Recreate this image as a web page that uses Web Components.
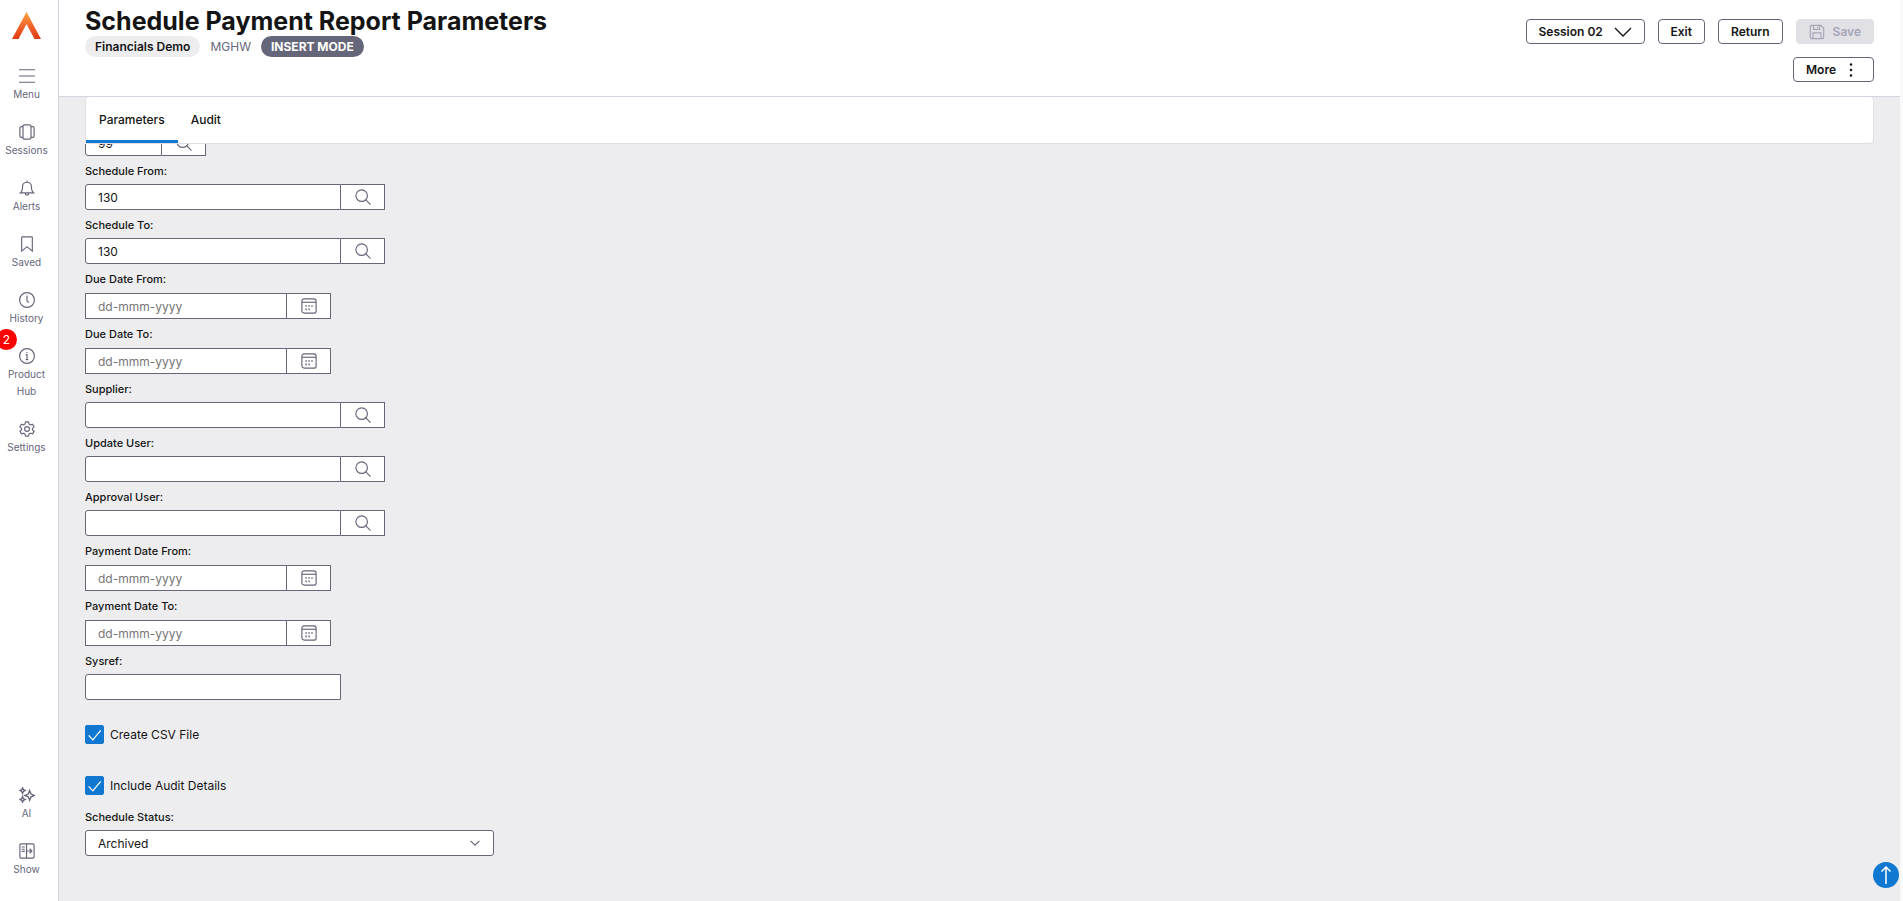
<!DOCTYPE html>
<html lang="en">
<head>
  <meta charset="utf-8">
  <meta name="viewport" content="width=device-width, initial-scale=1">
  <title>Schedule Payment Report Parameters</title>
  <style>
    :root {
      --ink: #141414;
      --slate: #66667a;
      --line: #d5d3e0;
      --page: #ededef;
      --blue: #1178d1;
      --text-xs: 10px;
      --text-sm: 11px;
      --text-md: 12px;
      --text-xl: 25px;
    }

    html,
    body {
      height: 100%;
      margin: 0;
    }

    body {
      font-family: Inter, "Open Sans", sans-serif;
      font-size: var(--text-md);
      color: var(--ink);
      background: #fafafa;
    }
  </style>
</head>
<body>
  <app-shell>
    <side-bar slot="nav">
      <nav-item icon="menu">Menu</nav-item>
      <nav-item icon="sessions">Sessions</nav-item>
      <nav-item icon="bell">Alerts</nav-item>
      <nav-item icon="bookmark">Saved</nav-item>
      <nav-item icon="clock">History</nav-item>
      <nav-item icon="info" badge="2">Product Hub</nav-item>
      <nav-item icon="gear">Settings</nav-item>
      <nav-item slot="bottom" icon="sparkles">AI</nav-item>
      <nav-item slot="bottom" icon="panel">Show</nav-item>
    </side-bar>

    <page-header slot="header">
      <span slot="title">Schedule Payment Report Parameters</span>
      <status-chip slot="meta">Financials Demo</status-chip>
      <status-chip slot="meta" kind="plain">MGHW</status-chip>
      <status-chip slot="meta" kind="dark">INSERT MODE</status-chip>
      <session-picker slot="actions" value="Session 02"></session-picker>
      <tool-button slot="actions">Exit</tool-button>
      <tool-button slot="actions">Return</tool-button>
      <tool-button slot="actions" icon="save" disabled>Save</tool-button>
      <tool-button slot="more" icon="dots" icon-end>More</tool-button>
    </page-header>

    <tab-bar slot="tabs" tabs="Parameters,Audit"></tab-bar>

    <lookup-field kind="search" value="99" size="small"></lookup-field>
    <lookup-field kind="search" label="Schedule From:" value="130"></lookup-field>
    <lookup-field kind="search" label="Schedule To:" value="130"></lookup-field>
    <lookup-field kind="date" label="Due Date From:"></lookup-field>
    <lookup-field kind="date" label="Due Date To:"></lookup-field>
    <lookup-field kind="search" label="Supplier:"></lookup-field>
    <lookup-field kind="search" label="Update User:"></lookup-field>
    <lookup-field kind="search" label="Approval User:"></lookup-field>
    <lookup-field kind="date" label="Payment Date From:"></lookup-field>
    <lookup-field kind="date" label="Payment Date To:"></lookup-field>
    <lookup-field kind="text" label="Sysref:"></lookup-field>
    <check-field checked>Create CSV File</check-field>
    <check-field checked>Include Audit Details</check-field>
    <select-field label="Schedule Status:" value="Archived"></select-field>

    <back-to-top slot="float"></back-to-top>
  </app-shell>

  <script>
    const icons = {
      menu: `<path d="M0 2h18M0 9h18M0 16h18"/>`,
      sessions: `<rect x="4.5" y="1" width="9" height="16" rx="1.5"/><path d="M4.5 3H2.500A1.500 1.500 0 0 0 1 4.500v9A1.500 1.500 0 0 0 2.500 15h2M13.500 3h2A1.500 1.500 0 0 1 17 4.500v9a1.500 1.500 0 0 1-1.500 1.500h-2"/>`,
      bell: `<path d="M1.500 14.500C3.500 13 4 11.500 4 7.500a5 5 0 0 1 10 0c0 4 .5 5.500 2.500 7zM7 15a2 2 0 0 0 4 0M9 2.500V.5"/>`,
      bookmark: `<path d="M3.800 1h10.400a.8.8 0 0 1 .8.8V17L9 12l-6 5V1.800a.8.8 0 0 1 .8-.8z"/>`,
      clock: `<circle cx="9" cy="9" r="8.300"/><path d="M9 4v6l2 2"/>`,
      info: `<circle cx="9" cy="9" r="8.300"/><path d="M7.500 7.500H9V13M7.500 13h3M9 4.500v1.200"/>`,
      gear: `<path d="M7.300 1h3.400l.6 2.500 1.500.9 2.500-.8 1.700 3-1.900 1.700v1.500l1.900 1.700-1.700 3-2.500-.8-1.500.9-.6 2.400H7.300l-.6-2.400-1.500-.9-2.500.8-1.700-3 1.900-1.700V8.300L1 6.600l1.700-3 2.500.8 1.500-.9z" stroke-linejoin="round"/><circle cx="9" cy="9" r="2.700"/>`,
      sparkles: `<path d="M12 4 13.600 7.900 17.500 9.500 13.600 11.100 12 15 10.400 11.100 6.500 9.500 10.400 7.900zM4 .8 4.900 3 7 4 4.900 5 4 7.200 3.100 5 1 4 3.100 3zM4 10.800 4.900 13 7 14l-2.100 1L4 17.200 3.100 15 1 14l2.100-1z" stroke-width="1.500"/>`,
      panel: `<rect x="1" y="1" width="16" height="16" rx="1.500"/><path d="M8.500 1v16M3 4.500h3.500M3 7h3.500M3 9.500h3.500M8.500 9H14M12 6.500 14.500 9 12 11.500"/>`,
      search: `<circle cx="7.500" cy="7.500" r="6.500"/><path d="m12 12 5.500 5.500"/>`,
      calendar: `<rect x="1" y="1" width="16" height="16" rx="2.500"/><path d="M1 4.800h16"/><path d="M5 9h1.600M8.300 9h1.600M11.600 9h1.600M5 12.800h1.600M8.300 12.800h1.600" stroke-width="1.800"/>`,
      save: `<path d="M1.500 3A1.500 1.500 0 0 1 3 1.500h10.500l3 3V15a1.500 1.500 0 0 1-1.500 1.500H3A1.500 1.500 0 0 1 1.500 15zM5 1.500V6h7V1.500M4.500 16.500V10h9v6.500M9.800 3v1.500"/>`,
      dots: `<g fill="currentColor" stroke="none"><circle cx="9" cy="2" r="1.600"/><circle cx="9" cy="9" r="1.600"/><circle cx="9" cy="16" r="1.600"/></g>`,
      chevron: `<path d="m1 5 8 8 8-8"/>`,
      tick: `<path d="m2 10 5 5.500L16.500 4" stroke-width="1.500"/>`,
      up: `<path d="M9 18V1M4.500 5.500 9 1l4.500 4.500" stroke-width="1.500"/>`,
    };

    function icon(name, size = 16) {
      return `<svg width="${size}" height="${size}" viewBox="0 0 18 18" fill="none" stroke="currentColor" stroke-width="1.300" aria-hidden="true">${icons[name]}</svg>`;
    }

    class BaseElement extends HTMLElement {
      constructor() {
        super();
        this.attachShadow({ mode: "open" });
      }

      connectedCallback() {
        this.shadowRoot.innerHTML = `
          <style>
            * { box-sizing: border-box; }
            button, input, select { font: inherit; color: inherit; margin: 0; }
            button { cursor: pointer; }
            svg { display: block; flex: none; }
          </style>
          ${this.render()}
        `;
      }
    }

    class AppShell extends BaseElement {
      render() {
        return `
          <style>
            :host {
              display: grid;
              grid-template-columns: auto minmax(0, 1fr);
              height: 100vh;
              padding-right: 3px;
              box-sizing: border-box;
            }
            .page {
              display: flex;
              flex-direction: column;
              min-height: 0;
              background: var(--page);
            }
            .tabs { padding: 0 26px; }
            main {
              flex: 1;
              min-height: 0;
              overflow: hidden;
              padding: 0 26px;
            }
            /* the form is scrolled so its first row slides under the tabs */
            form { margin-top: -14px; }
          </style>
          <slot name="nav"></slot>
          <div class="page">
            <slot name="header"></slot>
            <div class="tabs"><slot name="tabs"></slot></div>
            <main><form><slot></slot></form></main>
          </div>
          <slot name="float"></slot>
        `;
      }
    }

    class SideBar extends BaseElement {
      render() {
        return `
          <style>
            :host {
              display: flex;
              box-sizing: border-box;
              width: 59px;
              background: #fff;
              border-right: 1px solid var(--line);
            }
            nav {
              flex: 1;
              display: flex;
              flex-direction: column;
              align-items: flex-start;
              padding: 12px 0 2px;
            }
            .logo { display: block; margin: 0 12px 28px; }
            .bottom { margin-top: auto; }
          </style>
          <nav aria-label="Main">
            <a class="logo" href="#" aria-label="Home">
              <svg width="29" height="28" viewBox="0 0 29 28">
                <defs>
                  <linearGradient id="flame" x1="0" y1="0" x2="0" y2="1">
                    <stop offset="0" stop-color="#fba43c"/>
                    <stop offset=".5" stop-color="#f2672e"/>
                    <stop offset="1" stop-color="#df3a12"/>
                  </linearGradient>
                </defs>
                <path fill="url(#flame)" d="M14.500 0 29 27h-6.500L14.500 12 6.500 27H0z"/>
              </svg>
            </a>
            <slot></slot>
            <div class="bottom"><slot name="bottom"></slot></div>
          </nav>
        `;
      }
    }

    class NavItem extends BaseElement {
      render() {
        const badge = this.getAttribute("badge");
        return `
          <style>
            :host { display: block; position: relative; width: 53px; color: var(--slate); }
            button {
              display: flex;
              flex-direction: column;
              align-items: center;
              gap: 2px;
              width: 100%;
              padding: 0 0 21px;
              border: 0;
              background: none;
              font-size: var(--text-xs);
              line-height: 17px;
            }
            .badge {
              position: absolute;
              left: -4px;
              top: -19px;
              width: 21px;
              height: 21px;
              border-radius: 50%;
              background: #f00;
              color: #fff;
              font-size: var(--text-md);
              line-height: 21px;
              text-align: center;
            }
          </style>
          <button type="button">${icon(this.getAttribute("icon"))}<span><slot></slot></span></button>
          ${badge ? `<span class="badge">${badge}</span>` : ""}
        `;
      }
    }

    class PageHeader extends BaseElement {
      render() {
        return `
          <style>
            :host { display: block; }
            header {
              display: flex;
              justify-content: space-between;
              min-height: 97px;
              padding: 8px 26px 13px;
              background: #fff;
              border-bottom: 1px solid var(--line);
            }
            h1 { margin: 0; font-size: var(--text-xl); line-height: 26px; font-weight: 700; }
            .meta { display: flex; align-items: center; gap: 10px; margin-top: 2px; }
            .tools {
              display: flex;
              flex-direction: column;
              align-items: flex-end;
              gap: 13px;
              padding-top: 11px;
            }
            .row { display: flex; gap: 13px; }
          </style>
          <header>
            <div>
              <h1><slot name="title"></slot></h1>
              <div class="meta"><slot name="meta"></slot></div>
            </div>
            <div class="tools">
              <div class="row"><slot name="actions"></slot></div>
              <div class="row"><slot name="more"></slot></div>
            </div>
          </header>
        `;
      }
    }

    class StatusChip extends BaseElement {
      render() {
        return `
          <style>
            :host {
              display: block;
              padding: 0 10px;
              border-radius: 11px;
              background: var(--page);
              font-weight: 600;
              line-height: 21px;
            }
            :host([kind="plain"]) { padding: 0; background: none; color: var(--slate); font-weight: 400; }
            :host([kind="dark"]) { background: var(--slate); color: #fff; font-weight: 700; }
          </style>
          <slot></slot>
        `;
      }
    }

    class ToolButton extends BaseElement {
      render() {
        const name = this.getAttribute("icon");
        const svg = name ? icon(name, name === "dots" ? 14 : 16) : "";
        const atEnd = this.hasAttribute("icon-end");
        return `
          <style>
            :host { display: block; }
            button {
              display: flex;
              align-items: center;
              gap: 8px;
              height: 25px;
              padding: 0 12px;
              border: 1px solid var(--slate);
              border-radius: 4px;
              background: #fff;
              font-weight: 600;
            }
            :host([icon-end]) button { padding-right: 15px; }
            button:disabled { border-color: #e0e0e5; background: #e0e0e5; color: #a6a5b8; cursor: default; }
          </style>
          <button type="button" ${this.hasAttribute("disabled") ? "disabled" : ""}>
            ${atEnd ? "" : svg}<slot></slot>${atEnd ? svg : ""}
          </button>
        `;
      }
    }

    class SessionPicker extends BaseElement {
      render() {
        return `
          <style>
            :host { display: grid; align-items: center; width: 119px; }
            select, svg { grid-area: 1 / 1; }
            select {
              appearance: none;
              width: 100%;
              height: 25px;
              padding: 0 12px;
              border: 1px solid var(--slate);
              border-radius: 4px;
              background: #fff;
              font-weight: 600;
            }
            svg { justify-self: end; margin-right: 13px; pointer-events: none; }
          </style>
          <select aria-label="Session"><option>${this.getAttribute("value")}</option></select>
          ${icon("chevron", 18)}
        `;
      }
    }

    class TabBar extends BaseElement {
      render() {
        const tabs = this.getAttribute("tabs").split(",");
        return `
          <style>
            :host { display: block; }
            div {
              display: flex;
              height: 47px;
              background: #fff;
              border: 1px solid #dfdfe5;
              border-top: 0;
              border-radius: 4px;
            }
            button {
              padding: 1px 13px 0;
              border: 0;
              border-bottom: 3px solid transparent;
              background: none;
              font-weight: 500;
            }
            button[aria-selected="true"] { border-color: var(--blue); }
          </style>
          <div role="tablist">
            ${tabs.map((tab, i) => `<button type="button" role="tab" aria-selected="${i === 0}">${tab}</button>`).join("")}
          </div>
        `;
      }
    }

    class LookupField extends BaseElement {
      render() {
        const kind = this.getAttribute("kind");
        const label = this.getAttribute("label");
        const value = this.getAttribute("value") || "";
        const isDate = kind === "date";
        return `
          <style>
            :host { display: block; }
            label {
              display: block;
              padding: 7px 0 5px;
              font-size: var(--text-sm);
              line-height: 16px;
              font-weight: 500;
            }
            :host([kind="date"]) label { padding-bottom: 6px; }
            .box { display: flex; }
            input {
              width: 256px;
              height: 26px;
              padding: 0 12px;
              border: 1px solid var(--slate);
              border-radius: 3px 0 0 3px;
              background: #fff;
              outline: 0;
            }
            :host([kind="date"]) input { width: 202px; border-radius: 0; }
            :host([size="small"]) input { width: 77px; }
            input::placeholder { color: #757575; opacity: 1; }
            button {
              display: flex;
              align-items: center;
              justify-content: center;
              width: 44px;
              padding: 0;
              border: 1px solid var(--slate);
              border-left: 0;
              background: #fff;
              color: var(--slate);
            }
          </style>
          ${label ? `<label for="field">${label}</label>` : ""}
          <div class="box">
            <input id="field" type="text" value="${value}" ${label ? "" : `aria-label="Company"`} ${isDate ? `placeholder="dd-mmm-yyyy"` : ""}>
            ${kind === "text" ? "" : `<button type="button" aria-label="${isDate ? "Pick date" : "Look up"}">${icon(isDate ? "calendar" : "search")}</button>`}
          </div>
        `;
      }
    }

    class CheckField extends BaseElement {
      render() {
        return `
          <style>
            :host { display: block; padding-top: 25px; }
            :host(:not(:first-of-type)) { padding-top: 32px; }
            label { display: flex; align-items: center; gap: 6px; width: fit-content; }
            .mark { display: grid; place-items: center; color: #fff; }
            .mark > * { grid-area: 1 / 1; }
            input {
              appearance: none;
              width: 19px;
              height: 19px;
              border: 1px solid var(--slate);
              border-radius: 2px;
              background: #fff;
            }
            input:checked { border-color: var(--blue); background: var(--blue); }
            svg { pointer-events: none; }
          </style>
          <label>
            <span class="mark">
              <input type="checkbox" ${this.hasAttribute("checked") ? "checked" : ""}>
              ${icon("tick", 15)}
            </span>
            <slot></slot>
          </label>
        `;
      }
    }

    class SelectField extends BaseElement {
      render() {
        return `
          <style>
            :host { display: block; padding-top: 7px; }
            label {
              display: block;
              padding: 7px 0 5px;
              font-size: var(--text-sm);
              line-height: 16px;
              font-weight: 500;
            }
            .box { display: grid; align-items: center; width: 409px; max-width: 100%; }
            .box > * { grid-area: 1 / 1; }
            select {
              appearance: none;
              width: 100%;
              height: 26px;
              padding: 0 12px;
              border: 1px solid var(--slate);
              border-radius: 3px;
              background: #fff;
            }
            svg { justify-self: end; margin-right: 14px; color: var(--slate); pointer-events: none; stroke-width: 2; }
          </style>
          <label for="field">${this.getAttribute("label")}</label>
          <div class="box">
            <select id="field"><option>${this.getAttribute("value")}</option></select>
            ${icon("chevron", 10)}
          </div>
        `;
      }
    }

    class BackToTop extends BaseElement {
      render() {
        return `
          <style>
            :host { position: fixed; right: 4px; bottom: 13px; }
            button {
              display: flex;
              align-items: center;
              justify-content: center;
              width: 26px;
              height: 26px;
              padding: 0;
              border: 0;
              border-radius: 50%;
              background: var(--blue);
              color: #fff;
            }
          </style>
          <button type="button" aria-label="Back to top">${icon("up", 18)}</button>
        `;
      }
    }

    customElements.define("app-shell", AppShell);
    customElements.define("side-bar", SideBar);
    customElements.define("nav-item", NavItem);
    customElements.define("page-header", PageHeader);
    customElements.define("status-chip", StatusChip);
    customElements.define("tool-button", ToolButton);
    customElements.define("session-picker", SessionPicker);
    customElements.define("tab-bar", TabBar);
    customElements.define("lookup-field", LookupField);
    customElements.define("check-field", CheckField);
    customElements.define("select-field", SelectField);
    customElements.define("back-to-top", BackToTop);
  </script>
</body>
</html>
